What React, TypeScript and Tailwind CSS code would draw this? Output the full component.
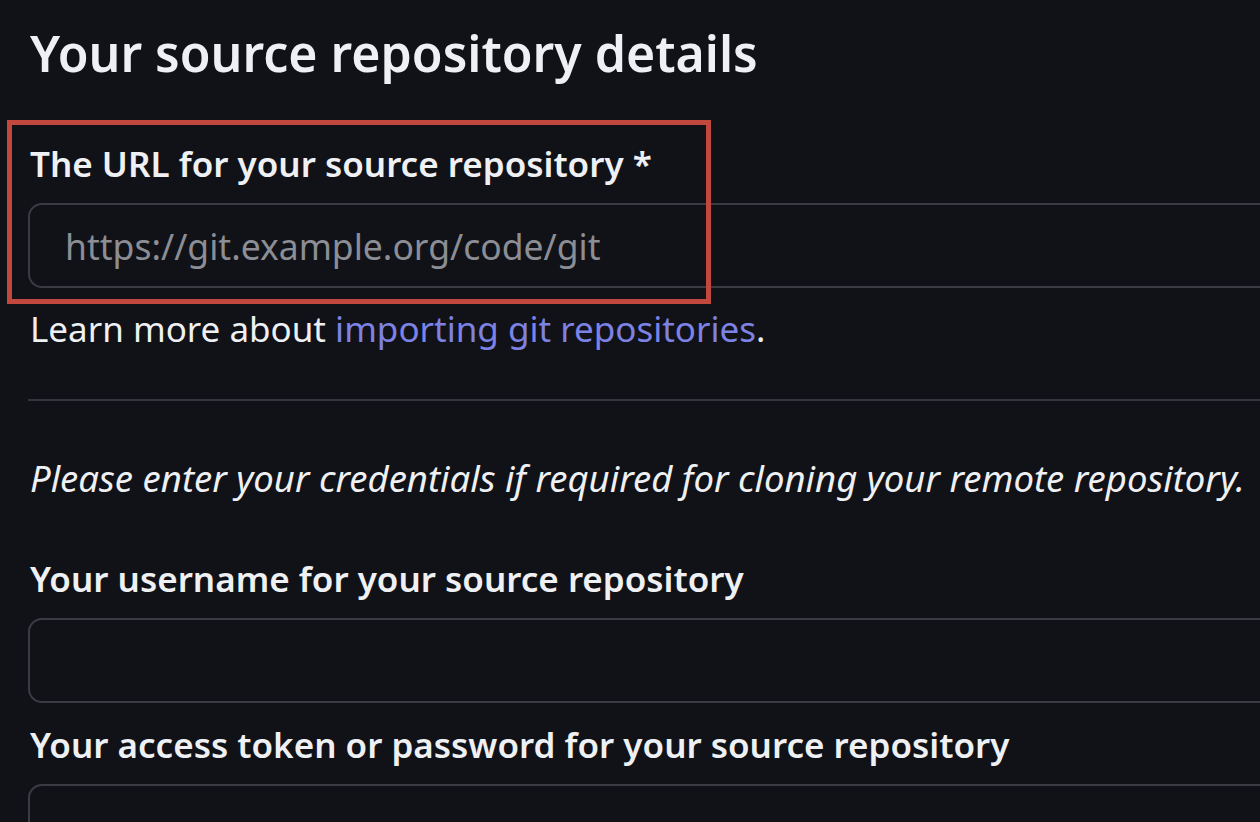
import React from "react";

const font = { fontFamily: '"Noto Sans", "Open Sans", sans-serif' };

const Field: React.FC<{ placeholder?: string; className?: string }> = ({ placeholder, className }) => (
  <div
    className={`h-[85px] w-[1400px] rounded-[14px] border-2 border-[#393c43] bg-[#111217] flex items-center pl-[35px] ${className ?? ""}`}
  >
    {placeholder && <span className="text-[35.5px] leading-[40px] text-[#8b8e95]">{placeholder}</span>}
  </div>
);

export default function App() {
  return (
    <div
      className="relative w-[1260px] h-[822px] overflow-hidden bg-[#111217] text-[#eef0f3]"
      style={font}
    >
      <div className="w-[1500px] pl-[28px] pt-[23px]">
        <h1 className="text-[50px] leading-[60px] font-semibold pl-[2px]">Your source repository details</h1>

        {/* url field */}
        <label className="block mt-[61px] text-[35px] leading-[40px] font-semibold pl-[2px]">
          The URL for your source repository *
        </label>
        <Field className="mt-[19px]" placeholder="https://git.example.org/code/git" />

        <p className="mt-[21px] text-[35px] leading-[40px] pl-[2px]">
          Learn more about <a className="text-[#7d83e4]">importing git repositories</a>.
        </p>

        <div className="mt-[50px] h-[2px] bg-[#32353c]" />

        <p className="mt-[57px] text-[36.5px] leading-[40px] italic pl-[2px]">
          Please enter your credentials if required for cloning your remote repository.
        </p>

        <label className="block mt-[61px] text-[35px] leading-[40px] font-semibold pl-[2px]">
          Your username for your source repository
        </label>
        <Field className="mt-[19px]" />

        <label className="block mt-[22px] text-[35px] leading-[40px] font-semibold pl-[2px]">
          Your access token or password for your source repository
        </label>
        <Field className="mt-[19px]" />
      </div>

      {/* annotation box */}
      <div className="absolute left-[7px] top-[120px] w-[704px] h-[184px] border-[5px] border-[#c2473d]" />
    </div>
  );
}
